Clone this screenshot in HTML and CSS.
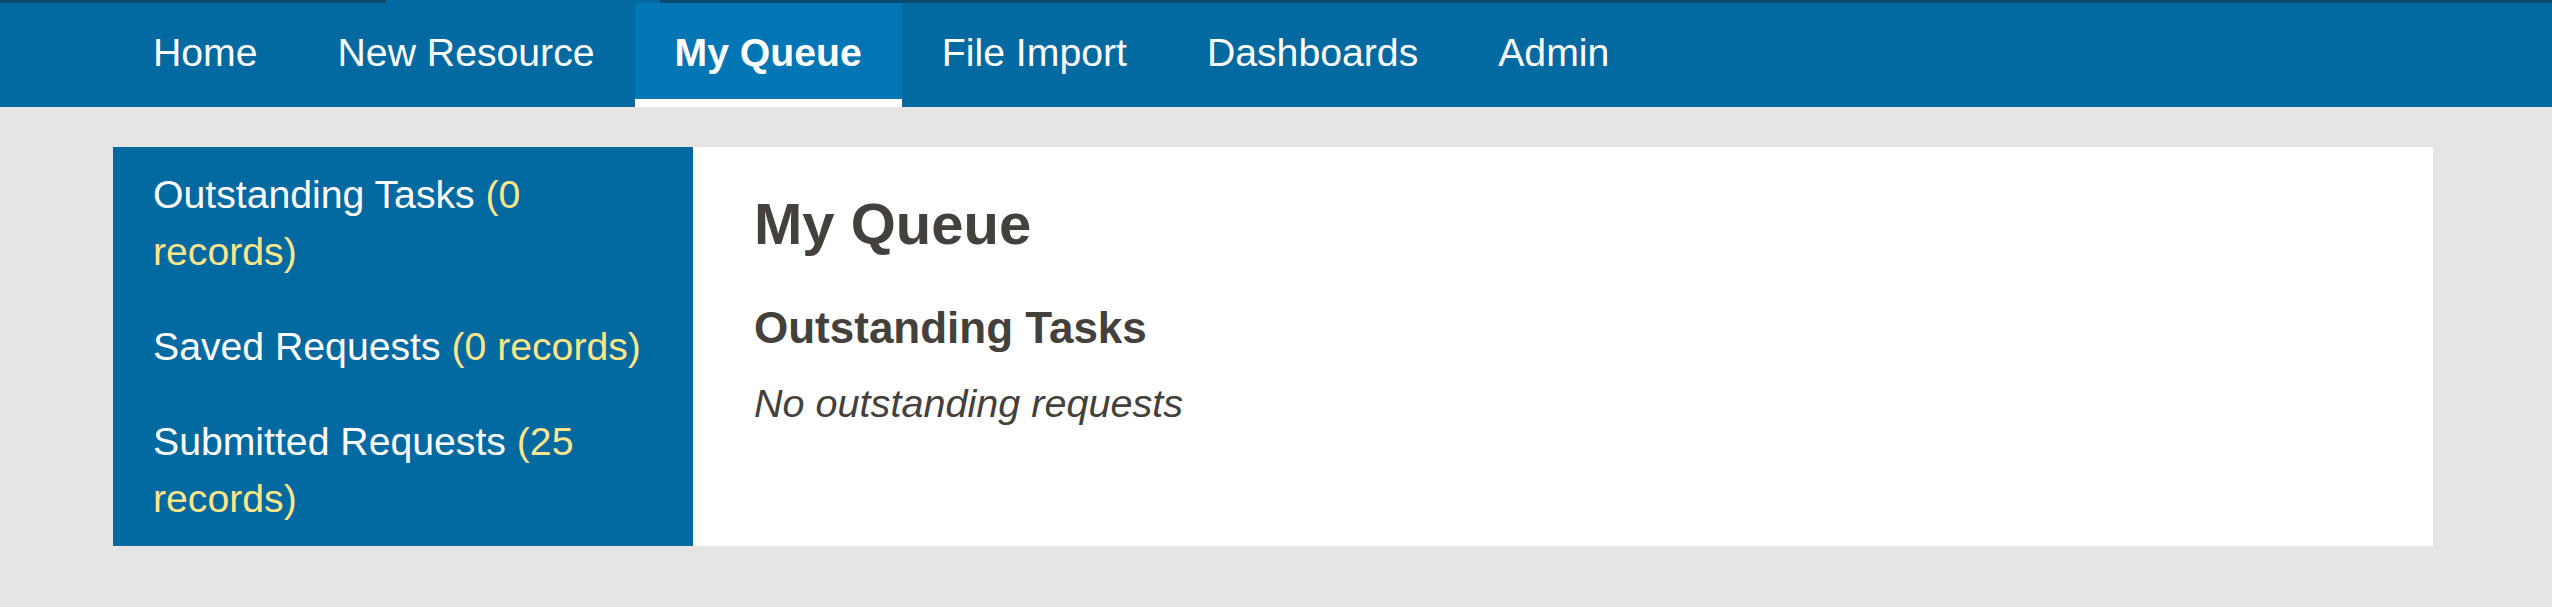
FILE: index.html
```html
<!DOCTYPE html>
<html lang="en">
<head>
<meta charset="utf-8">
<title>My Queue</title>
<link rel="stylesheet" href="styles.css">
</head>
<body>
<header class="navbar">
  <div class="topline"><div class="progress"></div></div>
  <nav class="nav-inner">
    <a class="nav-link" href="#">Home</a>
    <a class="nav-link" href="#">New Resource</a>
    <a class="nav-link active" href="#">My Queue</a>
    <a class="nav-link" href="#">File Import</a>
    <a class="nav-link" href="#">Dashboards</a>
    <a class="nav-link" href="#">Admin</a>
  </nav>
</header>
<main class="layout">
  <aside class="sidebar">
    <a class="side-item" href="#">Outstanding Tasks <span class="count">(0 records)</span></a>
    <a class="side-item" href="#">Saved Requests <span class="count">(0 records)</span></a>
    <a class="side-item" href="#">Submitted Requests <span class="count">(25 records)</span></a>
  </aside>
  <section class="content">
    <h1 class="title">My Queue</h1>
    <h2 class="subtitle">Outstanding Tasks</h2>
    <p class="empty">No outstanding requests</p>
  </section>
</main>
</body>
</html>
```
FILE: styles.css
```css
html, body {
  margin: 0;
  padding: 0;
}
body {
  background: #e7e5e4;
  font-family: "Liberation Sans", Arial, sans-serif;
  font-size: 39.2px;
  color: #44403c;
}
.navbar {
  background: #0369a1;
}
.topline {
  height: 3px;
  background: #0c4a6e;
  display: flex;
}
.progress {
  margin-left: 386px;
  width: 274px;
  background: #0369a1;
}
.nav-inner {
  display: flex;
  padding-left: 113px;
}
.nav-link {
  display: block;
  color: #ffffff;
  text-decoration: none;
  padding: 3px 40px 0 40px;
  line-height: 93px;
  border-bottom: 8px solid transparent;
  white-space: nowrap;
}
.nav-link.active {
  background: #0275b4;
  border-bottom-color: #ffffff;
  font-weight: bold;
}
.layout {
  display: grid;
  grid-template-columns: 580px 1740px;
  margin: 40px 0 0 113px;
}
.sidebar {
  background: #0369a1;
  display: flex;
  flex-direction: column;
}
.side-item {
  display: block;
  color: #ffffff;
  text-decoration: none;
  padding: 19px 40px;
  line-height: 57px;
}
.count {
  color: #fde68a;
}
.content {
  background: #ffffff;
  padding: 42px 61px 0 61px;
}
.title {
  margin: 0;
  font-size: 58px;
  line-height: 70.8px;
  font-weight: bold;
}
.subtitle {
  margin: 42.6px 0 0 0;
  font-size: 44px;
  line-height: 52.8px;
  font-weight: bold;
}
.empty {
  margin: 19.8px 0 0 0;
  font-size: 39.6px;
  font-style: italic;
  line-height: 57px;
}
```
